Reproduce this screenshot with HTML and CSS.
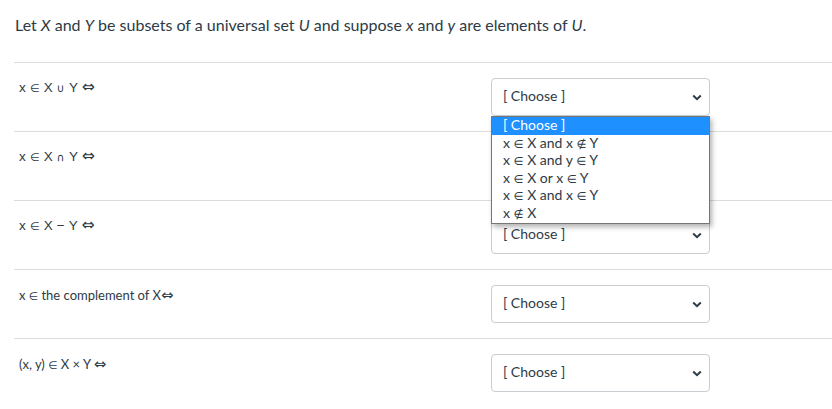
FILE: index.html
```html
<!DOCTYPE html>
<html>
<head>
<meta charset="utf-8">
<link rel="stylesheet" href="styles.css">
</head>
<body>
<div class="question">
  <p class="intro">Let <i>X</i> and <i>Y</i> be subsets of a universal set <i>U</i> and suppose <i>x</i> and <i>y</i> are elements of <i>U</i>.</p>

  <div class="row">
    <div class="label sym">x <span class="op">∈</span> X <span class="op">∪</span> Y <span class="arr">⇔</span></div>
    <div class="select-wrap">
      <div class="select"><span>[ Choose ]</span><svg class="chev" width="10" height="7" viewBox="0 0 10 7"><path d="M1.2 1.5 L5 5.2 L8.8 1.5" fill="none" stroke="#2d3b45" stroke-width="2"/></svg></div>
      <ul class="listbox">
        <li class="selected">[ Choose ]</li>
        <li>x <span class="op">∈</span> X and x <span class="op">∉</span> Y</li>
        <li>x <span class="op">∈</span> X and y <span class="op">∈</span> Y</li>
        <li>x <span class="op">∈</span> X or x <span class="op">∈</span> Y</li>
        <li>x <span class="op">∈</span> X and x <span class="op">∈</span> Y</li>
        <li>x <span class="op">∉</span> X</li>
      </ul>
    </div>
  </div>

  <div class="row">
    <div class="label sym">x <span class="op">∈</span> X <span class="op">∩</span> Y <span class="arr">⇔</span></div>
    <div class="select-wrap">
      <div class="select"><span>[ Choose ]</span><svg class="chev" width="10" height="7" viewBox="0 0 10 7"><path d="M1.2 1.5 L5 5.2 L8.8 1.5" fill="none" stroke="#2d3b45" stroke-width="2"/></svg></div>
    </div>
  </div>

  <div class="row">
    <div class="label sym">x <span class="op">∈</span> X − Y <span class="arr">⇔</span></div>
    <div class="select-wrap">
      <div class="select"><span>[ Choose ]</span><svg class="chev" width="10" height="7" viewBox="0 0 10 7"><path d="M1.2 1.5 L5 5.2 L8.8 1.5" fill="none" stroke="#2d3b45" stroke-width="2"/></svg></div>
    </div>
  </div>

  <div class="row">
    <div class="label">x <span class="op">∈</span> the complement of X<span class="arr">⇔</span></div>
    <div class="select-wrap">
      <div class="select"><span>[ Choose ]</span><svg class="chev" width="10" height="7" viewBox="0 0 10 7"><path d="M1.2 1.5 L5 5.2 L8.8 1.5" fill="none" stroke="#2d3b45" stroke-width="2"/></svg></div>
    </div>
  </div>

  <div class="row">
    <div class="label">(x, y) <span class="op">∈</span> X × Y <span class="arr">⇔</span></div>
    <div class="select-wrap">
      <div class="select"><span>[ Choose ]</span><svg class="chev" width="10" height="7" viewBox="0 0 10 7"><path d="M1.2 1.5 L5 5.2 L8.8 1.5" fill="none" stroke="#2d3b45" stroke-width="2"/></svg></div>
    </div>
  </div>
</div>
</body>
</html>
```

FILE: styles.css
```css
html, body {
  margin: 0;
  padding: 0;
  background: #fff;
}
body {
  font-family: Lato, "DejaVu Sans", sans-serif;
  color: #2d3b45;
}
.question {
  padding-left: 14px;
}
.intro {
  margin: 0;
  padding: 15px 0 0 1px;
  height: 47px;
  font-size: 16px;
  line-height: 20px;
}
.row {
  border-top: 1px solid #dcdcdc;
  height: 68px;
  display: grid;
  grid-template-columns: 477px 219px;
  align-items: start;
}
.label {
  padding: 17px 0 0 5px;
  font-size: 13px;
  line-height: 16px;
  color: #2d3b45;
}
.label.sym {
  font-family: "Liberation Sans", Arial, sans-serif;
  font-size: 13.5px;
  letter-spacing: 0.2px;
}
.op {
  font-family: "DejaVu Sans", sans-serif;
  font-size: 0.82em;
  line-height: 1;
}
.arr {
  font-family: "DejaVu Sans", sans-serif;
  font-size: 1.15em;
  line-height: 1;
}
.select-wrap {
  position: relative;
  margin-top: 15px;
}
.select {
  box-sizing: border-box;
  height: 38px;
  border: 1px solid #c7cdd1;
  border-radius: 4px;
  display: flex;
  align-items: center;
  justify-content: space-between;
  padding: 0 7px 3px 11px;
  font-size: 14px;
  color: #2d3b45;
  background: #fff;
}
.chev {
  display: block;
  margin-top: 3px;
}
.listbox {
  position: absolute;
  top: 38px;
  left: 0;
  right: 0;
  margin: 0;
  padding: 0;
  list-style: none;
  background: #fff;
  border: 1px solid #767676;
  box-shadow: 2px 3px 5px rgba(0, 0, 0, 0.3);
  z-index: 5;
}
.listbox li {
  height: 17.6px;
  line-height: 16px;
  padding-left: 11px;
  font-size: 14px;
  color: #2d3b45;
  overflow: hidden;
}
.listbox li.selected {
  background: #1e90ff;
  color: #fff;
}
```
